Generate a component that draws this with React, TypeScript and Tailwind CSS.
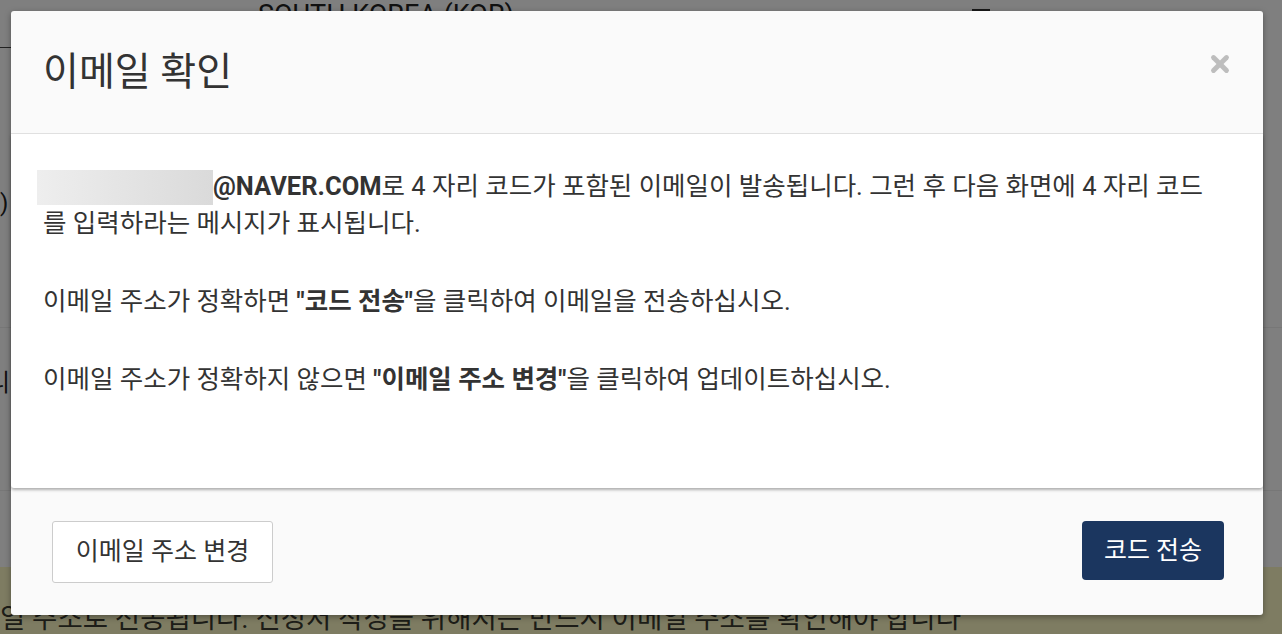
import { X } from "lucide-react";

const App = () => {
  return (
    <div className="relative h-[634px] w-[1282px] overflow-hidden bg-white font-['Roboto','Noto_Sans_CJK_KR',sans-serif] text-[#333]">
      {/* Page behind the modal */}
      <div className="flex h-full flex-col">
        <div className="h-[48px]">
          <div className="pl-[258px] pt-[1px] text-[27px] leading-[28px] text-[#222]">SOUTH KOREA (KOR)</div>
          <div className="ml-[972px] mt-[-20px] h-[2px] w-[18px] bg-[#333]" />
        </div>
        <div className="h-0 w-[40px] border-b border-[#444]" />
        <div className="h-[142px]" />
        <div className="text-[24px] leading-[30px] text-[#222]">)</div>
        <div className="h-[112px] border-b border-[#eee]" />
        <div className="h-[40px]" />
        <div className="-ml-[12px] text-[24px] leading-[30px] text-[#222]">니</div>
        <div className="h-[95px] border-b border-[#eee]" />
        <div className="mt-[76px] flex-1 bg-[#fcf8c4] pt-[37px]">
          <p className="whitespace-nowrap text-[27.5px] leading-[30px] text-[#3b3b30]">
            일 주소로 전송됩니다. 신청서 작성을 위해서는 반드시 이메일 주소를 확인해야 합니다
          </p>
        </div>
      </div>

      {/* Backdrop */}
      <div className="absolute inset-0 bg-black/50" />

      {/* Modal */}
      <div className="absolute left-[11px] top-[11px] flex h-[604px] w-[1252px] flex-col rounded-[3px] bg-[#fafafa] shadow-[0_2px_6px_rgba(0,0,0,0.35)]">
        {/* Header */}
        <div className="flex h-[123px] items-center justify-between border-b border-[#e3e3e3] pl-[32px] pr-[30px]">
          <h2 className="text-[39px] font-normal leading-[48px] text-[#333]">이메일 확인</h2>
          <X className="mb-[16px] h-[26px] w-[26px] text-[#bdbdbd]" strokeWidth={4.5} />
        </div>

        {/* Body */}
        <div className="relative z-10 h-[354px] rounded-b-[3px] bg-white pl-[32px] pr-[48px] pt-[34px] text-[25.5px] leading-[37px] text-[#333] shadow-[0_2px_3px_rgba(0,0,0,0.3)]">
          <p className="mb-[41px]">
            <span className="-ml-[6px] inline-block h-[35px] w-[176px] bg-gradient-to-r from-[#eeeeee] to-[#dadada] align-[-10px]" />
            <b className="font-bold">@NAVER.COM</b>로 4 자리 코드가 포함된 이메일이 발송됩니다. 그런 후 다음 화면에 4 자리 코드를 입력하라는 메시지가 표시됩니다.
          </p>
          <p className="mb-[41px]">
            이메일 주소가 정확하면 <b className="font-bold">"코드 전송"</b>을 클릭하여 이메일을 전송하십시오.
          </p>
          <p>
            이메일 주소가 정확하지 않으면 <b className="font-bold">"이메일 주소 변경"</b>을 클릭하여 업데이트하십시오.
          </p>
        </div>

        {/* Footer */}
        <div className="flex flex-1 items-start justify-between pl-[41px] pr-[39px] pt-[33px]">
          <button className="h-[62px] w-[221px] rounded-[3px] border border-[#cccccc] bg-white text-[25px] text-[#333]">
            이메일 주소 변경
          </button>
          <button className="h-[59px] w-[142px] rounded-[4px] bg-[#1b365f] text-[25px] text-white">
            코드 전송
          </button>
        </div>
      </div>
    </div>
  );
};

export default App;
